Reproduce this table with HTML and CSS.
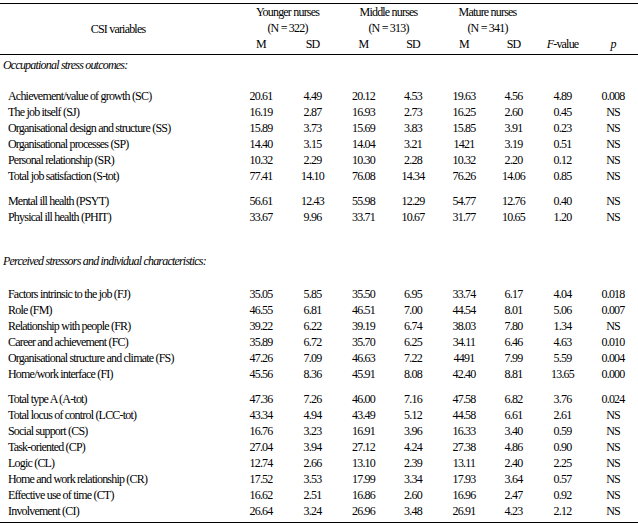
FILE: index.html
```html
<!DOCTYPE html>
<html>
<head>
<meta charset="utf-8">
<link rel="stylesheet" href="styles.css">
</head>
<body>
<table class="tbl">
<colgroup>
<col class="c-label"><col class="c1"><col class="c2"><col class="c3"><col class="c4"><col class="c5"><col class="c6"><col class="c7"><col class="c8">
</colgroup>
<thead>
<tr class="h1">
<th rowspan="3" class="hlabel">CSI variables</th>
<th colspan="2">Younger nurses</th>
<th colspan="2">Middle nurses</th>
<th colspan="2">Mature nurses</th>
<th></th><th></th>
</tr>
<tr class="h2">
<th colspan="2">(N = 322)</th>
<th colspan="2">(N = 313)</th>
<th colspan="2">(N = 341)</th>
<th></th><th></th>
</tr>
<tr class="h3">
<th>M</th><th>SD</th><th>M</th><th>SD</th><th>M</th><th>SD</th><th><i>F</i>-value</th><th><i>p</i></th>
</tr>
</thead>
<tbody>
<tr class="sec first"><td colspan="9">Occupational stress outcomes:</td></tr>
<tr class="r gap-a"><td>Achievement/value of growth (SC)</td><td>20.61</td><td>4.49</td><td>20.12</td><td>4.53</td><td>19.63</td><td>4.56</td><td>4.89</td><td>0.008</td></tr>
<tr class="r"><td>The job itself (SJ)</td><td>16.19</td><td>2.87</td><td>16.93</td><td>2.73</td><td>16.25</td><td>2.60</td><td>0.45</td><td>NS</td></tr>
<tr class="r"><td>Organisational design and structure (SS)</td><td>15.89</td><td>3.73</td><td>15.69</td><td>3.83</td><td>15.85</td><td>3.91</td><td>0.23</td><td>NS</td></tr>
<tr class="r"><td>Organisational processes (SP)</td><td>14.40</td><td>3.15</td><td>14.04</td><td>3.21</td><td>1421</td><td>3.19</td><td>0.51</td><td>NS</td></tr>
<tr class="r"><td>Personal relationship (SR)</td><td>10.32</td><td>2.29</td><td>10.30</td><td>2.28</td><td>10.32</td><td>2.20</td><td>0.12</td><td>NS</td></tr>
<tr class="r"><td>Total job satisfaction (S-tot)</td><td>77.41</td><td>14.10</td><td>76.08</td><td>14.34</td><td>76.26</td><td>14.06</td><td>0.85</td><td>NS</td></tr>
<tr class="r gap-b"><td>Mental ill health (PSYT)</td><td>56.61</td><td>12.43</td><td>55.98</td><td>12.29</td><td>54.77</td><td>12.76</td><td>0.40</td><td>NS</td></tr>
<tr class="r"><td>Physical ill health (PHIT)</td><td>33.67</td><td>9.96</td><td>33.71</td><td>10.67</td><td>31.77</td><td>10.65</td><td>1.20</td><td>NS</td></tr>
<tr class="sec gap-c"><td colspan="9">Perceived stressors and individual characteristics:</td></tr>
<tr class="r gap-d"><td>Factors intrinsic to the job (FJ)</td><td>35.05</td><td>5.85</td><td>35.50</td><td>6.95</td><td>33.74</td><td>6.17</td><td>4.04</td><td>0.018</td></tr>
<tr class="r"><td>Role (FM)</td><td>46.55</td><td>6.81</td><td>46.51</td><td>7.00</td><td>44.54</td><td>8.01</td><td>5.06</td><td>0.007</td></tr>
<tr class="r"><td>Relationship with people (FR)</td><td>39.22</td><td>6.22</td><td>39.19</td><td>6.74</td><td>38.03</td><td>7.80</td><td>1.34</td><td>NS</td></tr>
<tr class="r"><td>Career and achievement (FC)</td><td>35.89</td><td>6.72</td><td>35.70</td><td>6.25</td><td>34.11</td><td>6.46</td><td>4.63</td><td>0.010</td></tr>
<tr class="r"><td>Organisational structure and climate (FS)</td><td>47.26</td><td>7.09</td><td>46.63</td><td>7.22</td><td>4491</td><td>7.99</td><td>5.59</td><td>0.004</td></tr>
<tr class="r"><td>Home/work interface (FI)</td><td>45.56</td><td>8.36</td><td>45.91</td><td>8.08</td><td>42.40</td><td>8.81</td><td>13.65</td><td>0.000</td></tr>
<tr class="r gap-b"><td>Total type A (A-tot)</td><td>47.36</td><td>7.26</td><td>46.00</td><td>7.16</td><td>47.58</td><td>6.82</td><td>3.76</td><td>0.024</td></tr>
<tr class="r"><td>Total locus of control (LCC-tot)</td><td>43.34</td><td>4.94</td><td>43.49</td><td>5.12</td><td>44.58</td><td>6.61</td><td>2.61</td><td>NS</td></tr>
<tr class="r"><td>Social support (CS)</td><td>16.76</td><td>3.23</td><td>16.91</td><td>3.96</td><td>16.33</td><td>3.40</td><td>0.59</td><td>NS</td></tr>
<tr class="r"><td>Task-oriented (CP)</td><td>27.04</td><td>3.94</td><td>27.12</td><td>4.24</td><td>27.38</td><td>4.86</td><td>0.90</td><td>NS</td></tr>
<tr class="r"><td>Logic (CL)</td><td>12.74</td><td>2.66</td><td>13.10</td><td>2.39</td><td>13.11</td><td>2.40</td><td>2.25</td><td>NS</td></tr>
<tr class="r"><td>Home and work relationship (CR)</td><td>17.52</td><td>3.53</td><td>17.99</td><td>3.34</td><td>17.93</td><td>3.64</td><td>0.57</td><td>NS</td></tr>
<tr class="r"><td>Effective use of time (CT)</td><td>16.62</td><td>2.51</td><td>16.86</td><td>2.60</td><td>16.96</td><td>2.47</td><td>0.92</td><td>NS</td></tr>
<tr class="r last"><td>Involvement (CI)</td><td>26.64</td><td>3.24</td><td>26.96</td><td>3.48</td><td>26.91</td><td>4.23</td><td>2.12</td><td>NS</td></tr>
</tbody>
</table>
</body>
</html>
```

FILE: styles.css
```css
body {
  margin: 0;
  background: #fff;
  color: #000;
  font-family: "Liberation Serif", "Times New Roman", serif;
  font-size: 12px;
  letter-spacing: -0.8px;
}
.tbl {
  border-collapse: collapse;
  table-layout: fixed;
  width: 638px;
  margin-top: 3px;
}
.c-label { width: 236px; }
.c1 { width: 50px; }
.c2 { width: 53px; }
.c3 { width: 49px; }
.c4 { width: 50px; }
.c5 { width: 52px; }
.c6 { width: 47px; }
.c7 { width: 51px; }
.c8 { width: 50px; }
.tbl th {
  font-weight: normal;
  padding: 0;
  height: 16px;
  line-height: 16px;
  text-align: center;
  vertical-align: middle;
}
.tbl thead {
  border-top: 1px solid #000;
  border-bottom: 1px solid #000;
}
.tbl .h1 th { padding-top: 0; }
.tbl .h3 th { padding-bottom: 2px; }
.tbl td {
  padding: 0;
  height: 16px;
  line-height: 16px;
  text-align: center;
  white-space: nowrap;
}
.tbl .r td:first-child {
  text-align: left;
  padding-left: 8px;
}
.tbl .sec td {
  text-align: left;
  font-style: italic;
  padding-left: 3px;
}
.tbl .sec.first td { padding-top: 2px; }
.tbl .gap-a td { padding-top: 15px; }
.tbl .gap-b td { padding-top: 9px; }
.tbl .gap-c td { padding-top: 28px; }
.tbl .gap-d td { padding-top: 17px; }
.tbl .last td { padding-bottom: 3px; }
.tbl tbody { border-bottom: 1px solid #000; }
```
